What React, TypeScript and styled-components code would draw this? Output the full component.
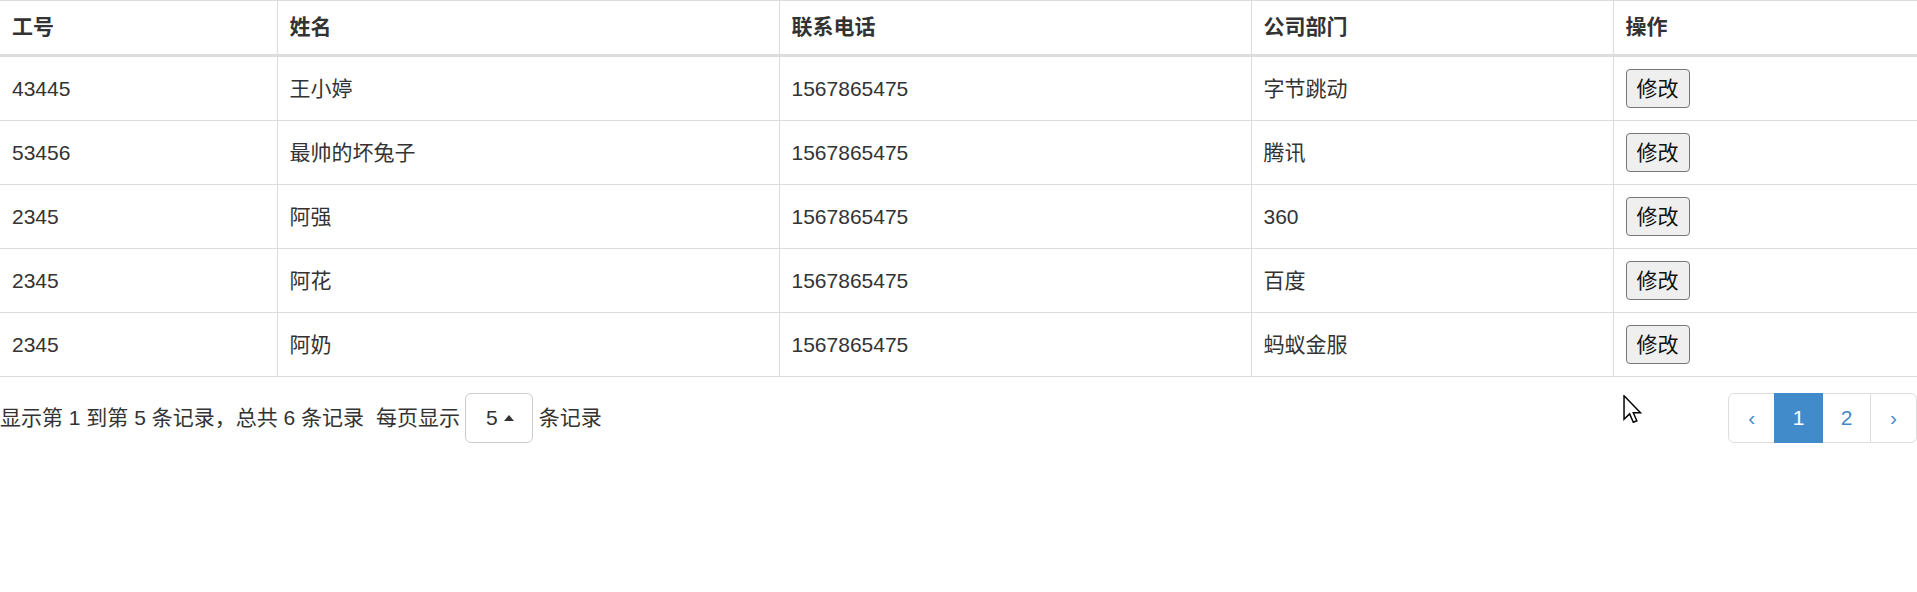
import React from "react";
import styled, { createGlobalStyle } from "styled-components";

const GlobalStyle = createGlobalStyle`
  html, body {
    margin: 0;
    padding: 0;
    background: #fff;
  }
  body {
    font-family: "Liberation Sans", "Noto Sans CJK SC", sans-serif;
    font-size: 21px;
    line-height: 30px;
    color: #333;
  }
  * { box-sizing: border-box; }
`;

const Page = styled.div`
  position: relative;
  width: 1917px;
  overflow: hidden;
`;

const Table = styled.table`
  width: 100%;
  table-layout: fixed;
  border-collapse: collapse;
  border-spacing: 0;
  border-top: 1px solid #ddd;
`;

const HeadCell = styled.th<{ $first?: boolean }>`
  text-align: left;
  font-weight: bold;
  padding: 11px 12px 12px;
  height: 53px;
  line-height: 30px;
  border-bottom: 3px solid #ddd;
  border-left: ${(p) => (p.$first ? "none" : "1px solid #ddd")};
  vertical-align: middle;
`;

const Row = styled.tr`
  border-bottom: 1px solid #ddd;
`;

const Cell = styled.td<{ $first?: boolean }>`
  padding: 12px 12px;
  height: 63px;
  line-height: 30px;
  border-left: ${(p) => (p.$first ? "none" : "1px solid #ddd")};
  vertical-align: middle;
`;

const EditButton = styled.button`
  height: 39px;
  padding: 0 10px;
  font-family: "Liberation Sans", "Noto Sans CJK SC", sans-serif;
  font-size: 21px;
  line-height: 36px;
  color: #111;
  background: #efefef;
  border: 1.5px solid #767676;
  border-radius: 4px;
`;

const Footer = styled.div`
  display: flex;
  justify-content: space-between;
  align-items: center;
  margin-top: 16px;
`;

const Detail = styled.div`
  display: flex;
  align-items: center;
  white-space: pre;
`;

const Info = styled.span`
  margin-right: 12px;
`;

const PageList = styled.span`
  display: flex;
  align-items: center;
  white-space: pre;
`;

const SizeButton = styled.button`
  display: inline-flex;
  align-items: center;
  height: 50px;
  padding: 0 18px 0 20px;
  margin: 0 6px 0 5px;
  font-family: "Liberation Sans", "Noto Sans CJK SC", sans-serif;
  font-size: 21px;
  line-height: 30px;
  color: #333;
  background: #fff;
  border: 1.5px solid #ccc;
  border-radius: 6px;
`;

const Caret = styled.span`
  display: inline-block;
  width: 0;
  height: 0;
  margin-left: 6px;
  border-left: 5px solid transparent;
  border-right: 5px solid transparent;
  border-bottom: 6px solid #333;
`;

const Pager = styled.ul`
  display: flex;
  list-style: none;
  margin: 0;
  padding: 0;
`;

const PageLink = styled.li<{ $active?: boolean; $pos?: "first" | "last" }>`
  height: 50px;
  padding: 0 ${(p) => (p.$pos ? "19px" : "18px")};
  margin-left: ${(p) => (p.$pos === "first" ? "0" : "-1.5px")};
  display: flex;
  align-items: center;
  justify-content: center;
  line-height: 30px;
  font-size: 21px;
  color: ${(p) => (p.$active ? "#fff" : "#428bca")};
  background: ${(p) => (p.$active ? "#428bca" : "#fff")};
  border: 1.5px solid ${(p) => (p.$active ? "#428bca" : "#ddd")};
  border-radius: ${(p) =>
    p.$pos === "first" ? "6px 0 0 6px" : p.$pos === "last" ? "0 6px 6px 0" : "0"};
  position: ${(p) => (p.$active ? "relative" : "static")};
`;

const Cursor = styled.svg`
  position: absolute;
  left: 1623px;
  top: 395px;
  width: 19px;
  height: 28px;
`;

const rows = [
  ["43445", "王小婷", "1567865475", "字节跳动"],
  ["53456", "最帅的坏兔子", "1567865475", "腾讯"],
  ["2345", "阿强", "1567865475", "360"],
  ["2345", "阿花", "1567865475", "百度"],
  ["2345", "阿奶", "1567865475", "蚂蚁金服"],
];

const widths = [277, 502, 472, 362, 304];
const headers = ["工号", "姓名", "联系电话", "公司部门", "操作"];

export default function App() {
  return (
    <Page>
      <GlobalStyle />
      <Table>
        <colgroup>
          {widths.map((w, i) => (
            <col key={i} style={{ width: w }} />
          ))}
        </colgroup>
        <thead>
          <tr>
            {headers.map((h, i) => (
              <HeadCell key={h} $first={i === 0}>
                {h}
              </HeadCell>
            ))}
          </tr>
        </thead>
        <tbody>
          {rows.map((r, i) => (
            <Row key={i}>
              {r.map((c, j) => (
                <Cell key={j} $first={j === 0}>
                  {c}
                </Cell>
              ))}
              <Cell>
                <EditButton>修改</EditButton>
              </Cell>
            </Row>
          ))}
        </tbody>
      </Table>
      <Footer>
        <Detail>
          <Info>显示第 1 到第 5 条记录，总共 6 条记录</Info>
          <PageList>
            每页显示
            <SizeButton>
              5<Caret />
            </SizeButton>
            条记录
          </PageList>
        </Detail>
        <Pager>
          <PageLink $pos="first">‹</PageLink>
          <PageLink $active>1</PageLink>
          <PageLink>2</PageLink>
          <PageLink $pos="last">›</PageLink>
        </Pager>
      </Footer>
      <Cursor viewBox="0 0 12.5 19">
        <path
          d="M0.5 0.5 L0.5 16.5 L4.3 12.8 L6.8 18.5 L9.2 17.5 L6.8 12 L11.7 12 Z"
          fill="#fff"
          stroke="#000"
          strokeWidth="1"
          strokeLinejoin="miter"
        />
      </Cursor>
    </Page>
  );
}
